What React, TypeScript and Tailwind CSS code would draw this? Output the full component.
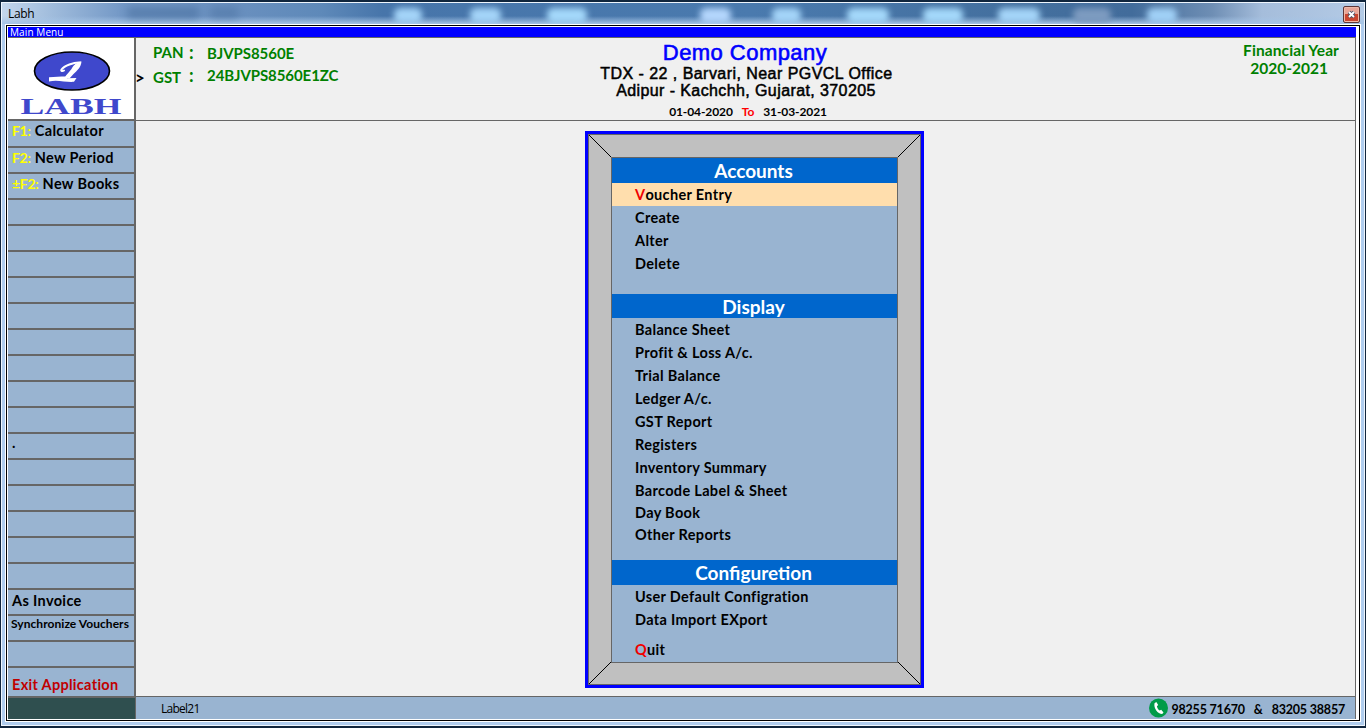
import { clsx } from "clsx";

const lato = "font-['Lato',sans-serif] font-bold";

type Item = { label: string; hot?: string; height: string };

const accounts: Item[] = [
  { hot: "V", label: "oucher Entry", height: "h-[23px] bg-[#ffdead]" },
  { label: "Create", height: "h-[23px]" },
  { label: "Alter", height: "h-[23px]" },
  { label: "Delete", height: "h-[23px]" },
];

const display: Item[] = [
  { label: "Balance Sheet", height: "h-[23px]" },
  { label: "Profit & Loss A/c.", height: "h-[23px]" },
  { label: "Trial Balance", height: "h-[23px]" },
  { label: "Ledger A/c.", height: "h-[23px]" },
  { label: "GST Report", height: "h-[23px]" },
  { label: "Registers", height: "h-[23px]" },
  { label: "Inventory Summary", height: "h-[23px]" },
  { label: "Barcode Label & Sheet", height: "h-[23px]" },
  { label: "Day Book", height: "h-[22px]" },
  { label: "Other Reports", height: "h-[22px]" },
];

const config: Item[] = [
  { label: "User Default Configration", height: "h-[23px]" },
  { label: "Data Import EXport", height: "h-[23px]" },
];

// soft highlights showing through the glass title bar
const blobs = [
  { x: 408, w: 28, c: "bg-[#a4d4f8]" },
  { x: 485, w: 31, c: "bg-[#a4d4f8]" },
  { x: 567, w: 40, c: "bg-[#a4d8fa]" },
  { x: 715, w: 31, c: "bg-[#b4d6fc]" },
  { x: 786, w: 29, c: "bg-[#a4d4f8]" },
  { x: 868, w: 42, c: "bg-[#a4d8fa]" },
  { x: 943, w: 40, c: "bg-[#a4d8fa]" },
  { x: 1019, w: 42, c: "bg-[#a4d4f8]" },
  { x: 1092, w: 38, c: "bg-[#7d9bc0]" },
  { x: 1162, w: 30, c: "bg-[#a0d0f6]" },
];

function Row({ item }: { item: Item }) {
  return (
    <div
      className={clsx(
        "flex items-center pt-px pl-[23px] text-[14.5px] leading-none whitespace-nowrap tracking-[0.33px]",
        item.height,
      )}
    >
      {item.hot && <span className="text-[#f00000]">{item.hot}</span>}
      {item.label}
    </div>
  );
}

function Heading({ text, className }: { text: string; className: string }) {
  return (
    <div
      className={clsx(
        "flex items-center justify-center bg-[#0066cc] pr-0.5 text-[19px] leading-none text-white",
        className,
      )}
    >
      {text}
    </div>
  );
}

function Logo() {
  return (
    <svg width="126" height="81" viewBox="0 0 126 81" className="block bg-white">
      <ellipse cx="64" cy="33" rx="37.5" ry="19" fill="#3f48cc" stroke="#000" strokeWidth="1.6" />
      <path
        d="M72 24.500C66 24 56 28 53.500 31.500c-1 1.500 1 2 2.500 1"
        fill="none"
        stroke="#fff"
        strokeWidth="2"
        strokeLinecap="round"
      />
      <path d="M73.500 23.500c-.5 6-4.500 9-8 12.500-1.500 1.500-2.500 3-4 4.500l-5-.5c2-4 5-6 7-9 1.500-2.500 3-5.500 9-7.500z" fill="#fff" />
      <path d="M41 39.200c6-.6 11-.8 17-.8l1 1.800 9.500-.2-2.500 3.800c-8 .8-16-2.600-25-.4z" fill="#fff" />
      <text
        x="12.500"
        y="76"
        textLength="101"
        lengthAdjust="spacingAndGlyphs"
        fontFamily="Liberation Serif, serif"
        fontWeight="bold"
        fontSize="23"
        fill="#3f48cc"
      >
        LABH
      </text>
    </svg>
  );
}

function SideRow({ hot, label, className }: { hot?: string; label?: string; className?: string }) {
  return (
    <div
      className={clsx(
        "box-content flex border-b-2 border-[#666] pl-1 text-[14.5px] leading-[18px] whitespace-nowrap tracking-[0.35px]",
        className,
      )}
    >
      {hot && <span className="mr-1 text-[14px] tracking-[-0.3px] text-[#ffff00]">{hot}</span>}
      {label}
    </div>
  );
}

function Sidebar() {
  return (
    <div className={clsx("flex w-[128px] shrink-0 flex-col border-r-2 border-[#666] bg-[#99b4d1]", lato)}>
      <div className="border-b-2 border-[#666] bg-white">
        <Logo />
      </div>
      <SideRow hot="F1:" label="Calculator" className="h-6 pt-px" />
      <SideRow hot="F2:" label="New Period" className="h-[23px] pt-px" />
      <SideRow hot="±F2:" label="New Books" className="h-[23px] pt-px" />
      {Array.from({ length: 15 }, (_, i) => (
        <SideRow key={i} label={i === 9 ? "." : undefined} className="h-6" />
      ))}
      <SideRow label="As Invoice" className="h-[22px] pt-0.5" />
      <div className="h-[26px] border-b-2 border-[#666] pt-0.5 pl-[3px] text-[12px] leading-3 tracking-[0.05px] whitespace-nowrap">
        Synchronize Vouchers
      </div>
      <SideRow className="h-6" />
      <div className="flex h-[30px] items-center border-b-2 border-[#666] pt-[7px] pl-1 text-[14.5px] leading-none tracking-[0.3px] whitespace-nowrap text-[#c00000]">
        Exit Application
      </div>
      <div className="-mr-px flex-1 bg-[#2f4f4f]" />
    </div>
  );
}

function Header() {
  return (
    <div className="flex h-[83px] shrink-0 border-b border-[#666]">
      <div className={clsx("relative w-[400px] text-[15px] leading-none text-[#008000]", lato)}>
        <span className="absolute top-[31px] -left-px text-[17px] text-black">&gt;</span>
        <div className="flex pt-[7px] pl-[17px]">
          <span className="w-9">PAN</span>
          <span className="w-[18px] text-[18px] leading-[14px]">:</span>
          <span className="pt-px tracking-[-0.05px]">BJVPS8560E</span>
        </div>
        <div className="flex pt-[7px] pl-[17px]">
          <span className="w-9 pt-0.5">GST</span>
          <span className="w-[18px] text-[18px] leading-[14px]">:</span>
          <span className="tracking-[-0.07px]">24BJVPS8560E1ZC</span>
        </div>
      </div>
      <div className="flex w-[420px] flex-col items-center font-['Liberation_Sans',sans-serif] leading-none whitespace-nowrap text-black">
        <div className="pt-1 pr-0.5 text-[22px] tracking-[0.45px] text-[#0000ff] [-webkit-text-stroke:0.6px]">
          Demo Company
        </div>
        <div className="pt-0.5 pl-px text-[16px] tracking-[0.45px] [-webkit-text-stroke:0.5px]">
          TDX - 22 , Barvari, Near PGVCL Office
        </div>
        <div className="pt-px text-[16px] tracking-[0.4px] [-webkit-text-stroke:0.5px]">
          Adipur - Kachchh, Gujarat, 370205
        </div>
        <div className={clsx("flex pt-[7px] pl-1 text-[12px] tracking-[-0.1px]", lato)}>
          <span>01-04-2020</span>
          <span className="mx-[9px] text-[#ff0000]">To</span>
          <span>31-03-2021</span>
        </div>
      </div>
      <div className={clsx("mr-[16px] ml-auto pt-[3px] text-center text-[15.5px] leading-[18px] text-[#008000]", lato)}>
        <div className="tracking-[0.1px]">Financial Year</div>
        <div className="pr-1">2020-2021</div>
      </div>
    </div>
  );
}

function MenuPanel() {
  return (
    <div className="relative mt-[10px] ml-[449px] h-[557px] w-[339px] border-[3px] border-[#0000ff] bg-[#c0c0c0]">
      <div className="h-full border border-[#666] px-[22px] pt-[22px] pb-[21px]">
        <div className={clsx("flex h-full flex-col border border-[#666] bg-[#99b4d1] text-black", lato)}>
          <Heading text="Accounts" className="h-[25px]" />
          {accounts.map((item) => (
            <Row key={item.label} item={item} />
          ))}
          <Heading text="Display" className="mt-[19px] h-6 pt-px" />
          {display.map((item) => (
            <Row key={item.label} item={item} />
          ))}
          <Heading text="Configuretion" className="mt-[14px] h-[25px]" />
          {config.map((item) => (
            <Row key={item.label} item={item} />
          ))}
          <div className="mt-[7px]">
            <Row item={{ hot: "Q", label: "uit", height: "h-[23px]" }} />
          </div>
        </div>
      </div>
      {/* mitred corners of the frame */}
      <svg className="pointer-events-none absolute inset-0" width="333" height="551" stroke="#000" strokeWidth="1">
        <path d="M1 1L23 23M332 1L310 23M1 550L23 528M332 550L310 528" />
      </svg>
    </div>
  );
}

function StatusBar() {
  return (
    <div
      className={clsx(
        "flex h-[23px] shrink-0 items-center border-t border-[#666] bg-[#99b4d1] text-[12.5px] leading-none whitespace-nowrap text-black",
        lato,
      )}
    >
      <span className="pt-0.5 pl-[25px] font-['Open_Sans',sans-serif] text-[12px] font-normal tracking-[-0.75px]">
        Label21
      </span>
      <svg className="ml-auto" width="19" height="20" viewBox="0 0 19 20">
        <circle cx="9.500" cy="10" r="9.500" fill="#009b48" />
        <path
          d="M5.500 5.200l1.800-1.200 1.900 3-1.300 1.300c.3 1.700 1.300 3.300 2.700 4.300l1.600-.8 2.300 2.600-1.300 1.600c-4.500 0-8.700-5.800-7.700-10.800z"
          fill="#fff"
        />
      </svg>
      <div className="mr-[10px] ml-[3px] flex pt-[5px] tracking-[-0.2px]">
        <span>98255 71670</span>
        <span className="mx-[9px]">&amp;</span>
        <span>83205 38857</span>
      </div>
    </div>
  );
}

function TitleBar() {
  return (
    <div className="relative h-[21px] shrink-0 overflow-hidden bg-[linear-gradient(90deg,#c4d6ec_0px,#a0bcdc_50px,#7398c6_120px,#6a90bf_230px,#5e89b9_320px,#4775aa_380px,#4a7aae_750px,#44709f_1000px,#426c9b_1130px,#6e8eb4_1210px,#a5bddb_1260px,#b4cbe6_1364px)]">
      <div className="absolute inset-x-0 bottom-0 h-2 bg-linear-to-b from-transparent to-[#a5c4e6]" />
      {blobs.map((b) => (
        <div
          key={b.x}
          className={clsx("absolute top-[5px] h-[15px] rounded-md blur-[3px]", b.c)}
          style={{ left: b.x - 2 - b.w / 2, width: b.w }}
        />
      ))}
      <div className="absolute top-1 left-[125px] h-3 w-[72px] bg-[#3f6797] opacity-50 blur-[4px]" />
      <div className="absolute top-1 left-[208px] h-3 w-7 bg-[#3f6797] opacity-40 blur-[4px]" />
      <span className="absolute top-[5px] left-[6px] font-['Open_Sans',sans-serif] text-[12px] leading-none tracking-[-0.3px] text-black">
        Labh
      </span>
      <div className="absolute top-[3px] right-[4px] flex h-[17px] w-[17px] items-center justify-center rounded-[2px] border border-[#5d3638] bg-linear-to-b from-[#e8a598] from-45% to-[#c84530] to-50% shadow-[inset_0_0_0_1px_#f0b8a8]">
        <svg width="9" height="9" viewBox="0 0 9 9" fill="none">
          <path d="M2 2l5 5M7 2l-5 5" stroke="#43506a" strokeWidth="3.600" />
          <path d="M2 2l5 5M7 2l-5 5" stroke="#fff" strokeWidth="1.900" />
        </svg>
      </div>
    </div>
  );
}

export default function App() {
  return (
    <div className="h-[728px] w-[1366px] overflow-hidden border-x border-t-2 border-b-2 border-[#10253d] bg-white">
      <div className="flex h-[724px] flex-col border border-[#eef5fd] bg-[#b0cdee]">
        <TitleBar />
        <div className="mr-[3px] ml-[3px] flex h-[698px] flex-col border border-white">
          <div className="flex h-full flex-col border border-black bg-white">
            <div className="flex h-full flex-col border border-white pr-[2px]">
              <div className="h-[10px] shrink-0 bg-[#0000ff] pl-[2px] font-['Open_Sans',sans-serif] text-[10px] leading-[11px] tracking-[0.1px] text-white">
                Main Menu
              </div>
              <div className="h-px shrink-0 bg-[#666]" />
              <div className="flex min-h-0 flex-1 border-r border-[#666] bg-[#f0f0f0]">
                <Sidebar />
                <div className="flex min-w-0 flex-1 flex-col">
                  <Header />
                  <div className="min-h-0 flex-1">
                    <MenuPanel />
                  </div>
                  <StatusBar />
                </div>
              </div>
            </div>
          </div>
        </div>
      </div>
    </div>
  );
}
